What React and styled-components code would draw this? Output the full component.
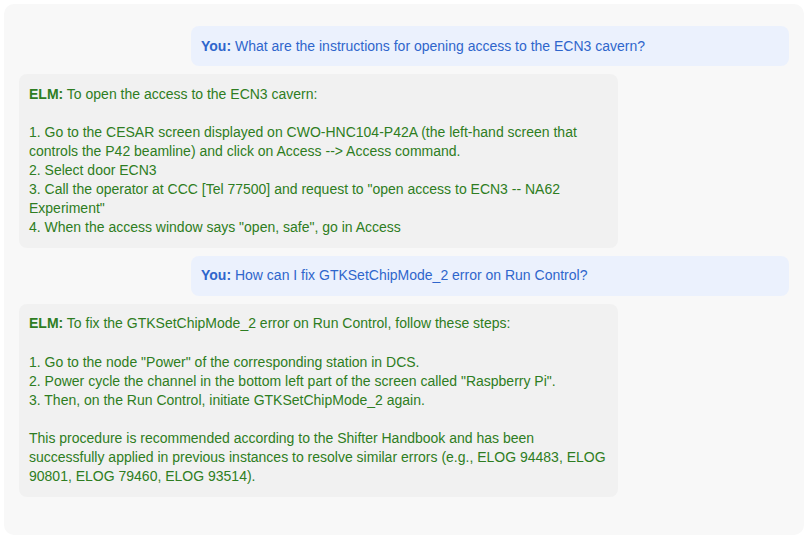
import React from 'react';
import styled, { createGlobalStyle } from 'styled-components';

const GlobalStyle = createGlobalStyle`
  html, body {
    margin: 0;
    padding: 0;
    background: #ffffff;
  }
  body {
    font-family: "Liberation Sans", Arial, Helvetica, sans-serif;
    font-size: 14px;
  }
`;

const Page = styled.div`
  padding: 4px;
`;

const Panel = styled.div`
  background: #f8f8f8;
  border-radius: 10px;
  padding: 22px 15px 38px;
  display: flex;
  flex-direction: column;
  gap: 8px;
`;

const Bubble = styled.div`
  width: ${p => (p.$user ? '598px' : '599px')};
  box-sizing: border-box;
  padding: 10.5px 10px;
  border-radius: 8px;
  line-height: 19.1px;
  white-space: pre-wrap;
  align-self: ${p => (p.$user ? 'flex-end' : 'flex-start')};
  background: ${p => (p.$user ? '#ebf1fd' : '#f1f1f1')};
  color: ${p => (p.$user ? '#2f66cc' : '#2e7d22')};
`;

const Sender = styled.strong`
  font-weight: bold;
`;

const messages = [
  {
    user: true,
    text: 'What are the instructions for opening access to the ECN3 cavern?'
  },
  {
    user: false,
    text: `To open the access to the ECN3 cavern:

1. Go to the CESAR screen displayed on CWO-HNC104-P42A (the left-hand screen that controls the P42 beamline) and click on Access --> Access command.
2. Select door ECN3
3. Call the operator at CCC [Tel 77500] and request to "open access to ECN3 -- NA62 Experiment"
4. When the access window says "open, safe", go in Access`
  },
  {
    user: true,
    text: 'How can I fix GTKSetChipMode_2 error on Run Control?'
  },
  {
    user: false,
    text: `To fix the GTKSetChipMode_2 error on Run Control, follow these steps:

1. Go to the node "Power" of the corresponding station in DCS.
2. Power cycle the channel in the bottom left part of the screen called "Raspberry Pi".
3. Then, on the Run Control, initiate GTKSetChipMode_2 again.

This procedure is recommended according to the Shifter Handbook and has been successfully applied in previous instances to resolve similar errors (e.g., ELOG 94483, ELOG 90801, ELOG 79460, ELOG 93514).`
  }
];

export default function App() {
  return (
    <Page>
      <GlobalStyle />
      <Panel>
        {messages.map((m, i) => (
          <Bubble key={i} $user={m.user}>
            <Sender>{m.user ? 'You:' : 'ELM:'}</Sender> {m.text}
          </Bubble>
        ))}
      </Panel>
    </Page>
  );
}
